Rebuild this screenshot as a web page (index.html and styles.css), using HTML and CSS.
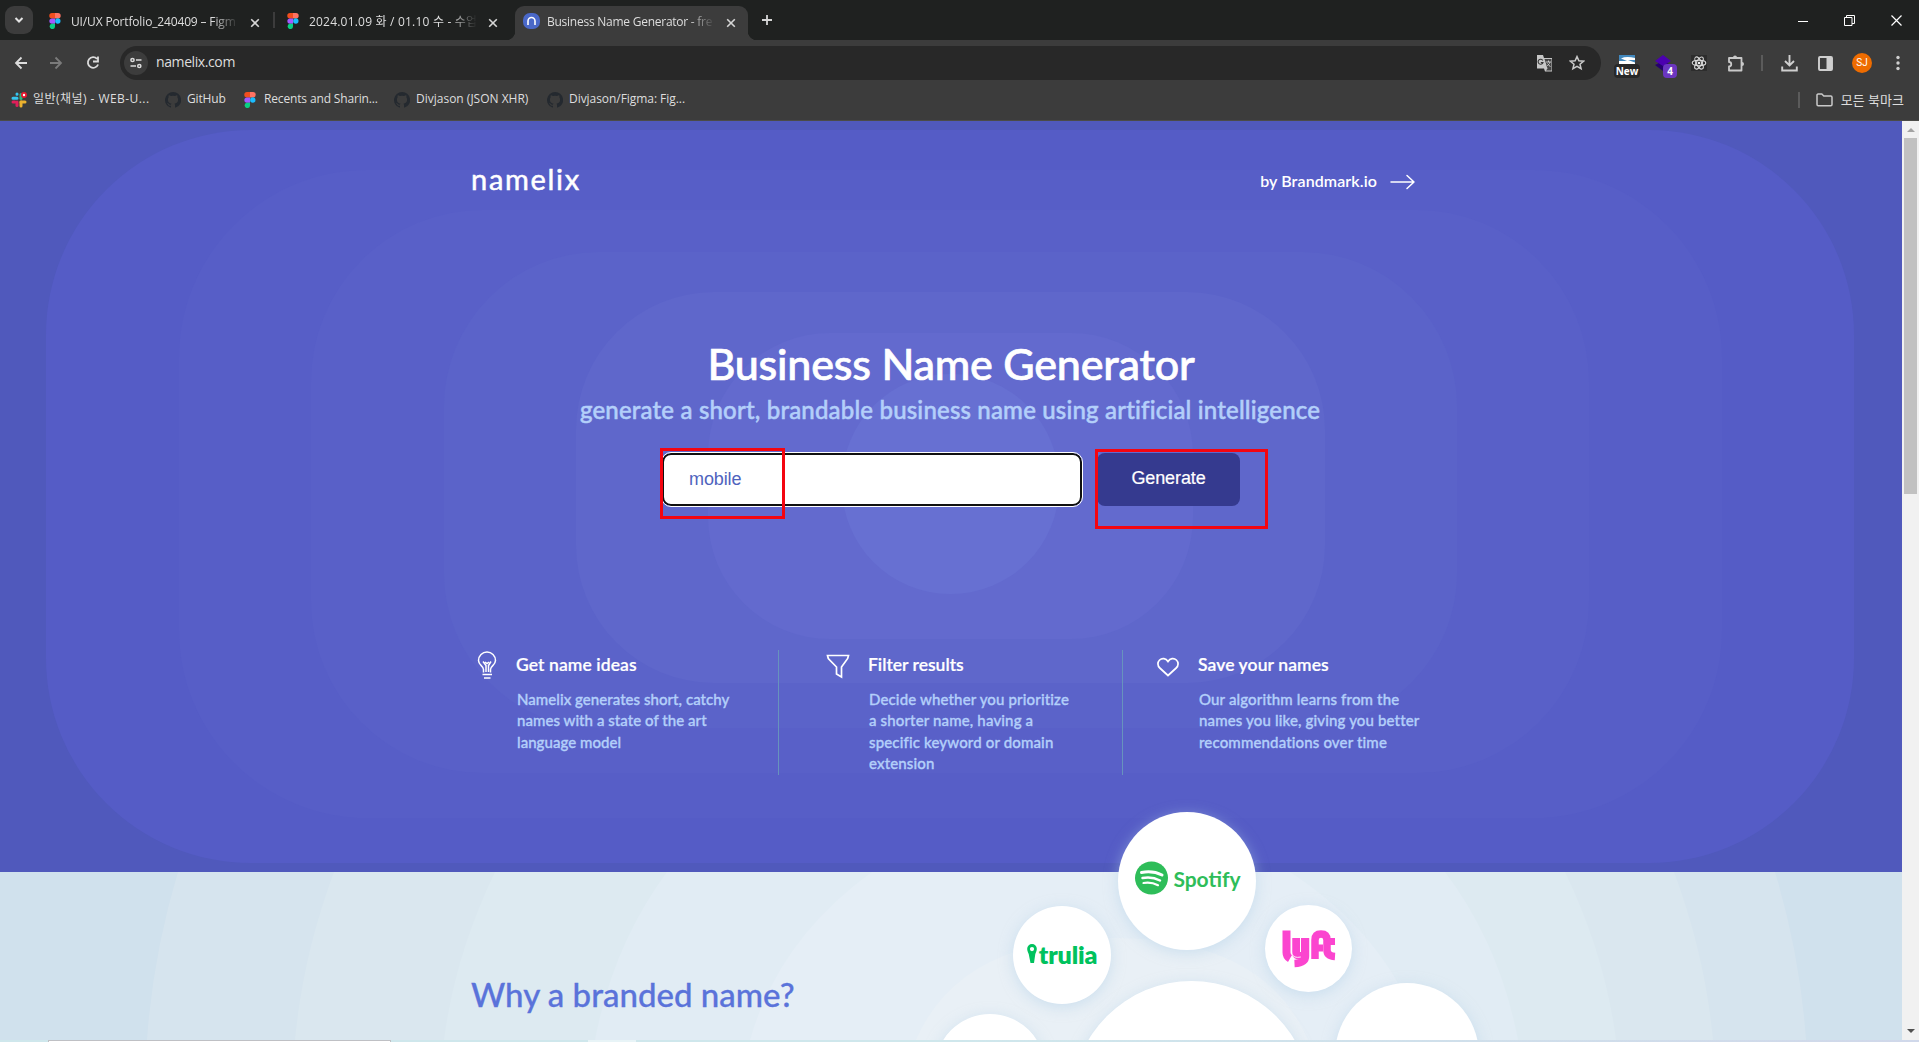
FILE: index.html
```
<!DOCTYPE html>
<html lang="ko">
<head>
<meta charset="utf-8">
<title>Business Name Generator</title>
<link rel="stylesheet" href="styles.css">
</head>
<body>
<svg width="0" height="0" class="defs">
  <symbol id="figma" viewBox="0 0 12 16"><path fill="#f24e1e" d="M3 0h3v5.400H3A2.700 2.700 0 0 1 3 0z"/><path fill="#ff7262" d="M6 0h3a2.700 2.700 0 0 1 0 5.400H6z"/><path fill="#a259ff" d="M3 5.400h3v5.300H3a2.650 2.650 0 0 1 0-5.300z"/><circle fill="#1abcfe" cx="8.800" cy="8" r="2.700"/><path fill="#0acf83" d="M3 10.700h3v2.600A2.700 2.700 0 1 1 3 10.700z"/></symbol>
  <symbol id="github" viewBox="0 0 16 16"><path fill="#24292f" d="M8 0a8 8 0 0 0-2.500 15.600c.4.1.5-.2.5-.4v-1.500c-2.200.5-2.700-1-2.700-1-.4-.9-.9-1.200-.9-1.200-.7-.5.1-.5.1-.5.8.1 1.200.8 1.200.8.7 1.300 1.900.9 2.300.7.1-.5.3-.9.5-1.100-1.800-.2-3.600-.9-3.600-4 0-.9.3-1.600.8-2.100-.1-.2-.4-1 .1-2.100 0 0 .7-.2 2.200.8a7.500 7.500 0 0 1 4 0c1.500-1 2.200-.8 2.200-.8.4 1.100.2 1.900.1 2.100.5.6.8 1.300.8 2.100 0 3.100-1.900 3.800-3.700 4 .3.300.6.8.6 1.500v2.300c0 .2.1.5.6.4A8 8 0 0 0 8 0z"/></symbol>
  <symbol id="close" viewBox="0 0 10 10"><path d="M1.200 1.200l7.600 7.600M8.800 1.200l-7.600 7.600" stroke="#d6d6d6" stroke-width="1.600"/></symbol>
</svg>
<div class="browser">
  <div class="tabs">
    <div class="tab-search"><svg width="18" height="28" viewBox="0 0 18 28"><path d="M5.500 12l3.500 3.500 3.500-3.500" fill="none" stroke="#e3e3e3" stroke-width="2"/></svg></div>
    <div class="tab tab-1"><svg class="fig" width="12" height="16"><use href="#figma"/></svg><span class="tab-title">UI/UX Portfolio_240409 – Figm</span><svg width="10" height="10"><use href="#close"/></svg></div>
    <div class="tab tab-2"><svg class="fig" width="12" height="16"><use href="#figma"/></svg><span class="tab-title">2024.01.09 화 / 01.10 수 - 수업</span><svg width="10" height="10"><use href="#close"/></svg></div>
    <div class="tab active"><svg class="nx" width="17" height="17" viewBox="0 0 17 17"><rect width="17" height="16" rx="7" fill="#4a68c8"/><path d="M5 12V8a3.500 3.500 0 0 1 7 0v4" fill="none" stroke="#fff" stroke-width="1.600"/></svg><span class="tab-title">Business Name Generator - fre</span><svg width="10" height="10"><use href="#close"/></svg></div>
    <svg class="plus" width="12" height="12" viewBox="0 0 12 12"><path d="M6 1v10M1 6h10" stroke="#d6d6d6" stroke-width="1.800"/></svg>
    <div class="win">
      <svg width="10" height="11"><path d="M0 6.500h10" stroke="#fff"/></svg>
      <svg width="11" height="11"><path d="M.5 2.500h7.500v8H.5zM2.500 2.500v-2h8v8H8" fill="none" stroke="#fff"/></svg>
      <svg width="11" height="11"><path d="M.5 .5l10 10M10.500 .5l-10 10" stroke="#fff" stroke-width="1.200"/></svg>
    </div>
  </div>
  <div class="toolbar">
    <svg class="nav" width="92" height="16" viewBox="0 0 92 16"><g fill="none" stroke-width="1.800"><path d="M13 8H2M7.500 2.500L2 8l5.500 5.500" stroke="#dcdcdc"/><path d="M36 8h11M41.500 2.500L47 8l-5.500 5.500" stroke="#7b7b7b"/><path d="M83 3.800a5.300 5.300 0 1 0 1.100 5.700M84 1.500v5h-5" stroke="#dcdcdc"/></g></svg>
    <div class="omnibox">
      <div class="site"><svg width="12" height="12" viewBox="0 0 12 12"><g fill="none" stroke="#dcdcdc" stroke-width="1.500"><circle cx="2.500" cy="3" r="1.600"/><path d="M6 3h5.500M.5 9H6"/><circle cx="9.300" cy="9" r="1.600"/></g></svg></div>
      <span class="url">namelix.com</span>
      <svg class="translate" width="17" height="17" viewBox="0 0 17 17"><path fill="#c7c7c7" d="M1 0h6l1 3h8v13.500H9l-1-3H1z"/><path d="M8.500 4h7v11.500H10l1.500-2z" fill="#454545"/><path d="M6.800 5.500A2.500 2.500 0 1 0 7 7.500H4.800M10 7h5M12.500 5.500V7M14 7c-.5 2-2 3.500-3.500 4M11.500 8.500l3 3.500" fill="none" stroke="#333" stroke-width="1.100"/><path d="M10 7h5M12.500 5.500V7M14 7c-.5 2-2 3.500-3.500 4M11.500 8.500l3 3.500" fill="none" stroke="#ccc"/></svg>
      <svg width="16" height="16" viewBox="0 0 16 16"><path d="M8 1.600l1.900 4.200 4.600.4-3.500 3 1.100 4.500L8 11.300l-4.100 2.400L5 9.200l-3.500-3 4.600-.4z" fill="none" stroke="#c9c9c9" stroke-width="1.500"/></svg>
    </div>
    <div class="exts">
      <div class="ext-new"><svg width="16" height="9" viewBox="0 0 16 9"><path fill="#4288bd" d="M0 0h16v9H0z"/><path fill="#fff" d="M2 3.500q5-2.500 14-.5v2H9l7 2.500V9H0V6h8z"/></svg><b>New</b></div>
      <div class="ext-layer"><svg width="17" height="17" viewBox="0 0 17 17"><path fill="#25006f" d="M0 10l8-4 8 4-8 6z"/><path fill="#4b00b0" d="M8 0l8 6-8 5-8-5z"/></svg><b>4</b></div>
      <svg class="react" width="16" height="16" viewBox="0 0 16 16"><path fill="#2d2d2d" d="M0 0h16v16H0z"/><g fill="none" stroke="#ddd" stroke-width="1.100"><ellipse cx="8" cy="8" rx="6.800" ry="2.700"/><ellipse cx="8" cy="8" rx="6.800" ry="2.700" transform="rotate(60 8 8)"/><ellipse cx="8" cy="8" rx="6.800" ry="2.700" transform="rotate(120 8 8)"/></g><circle cx="8" cy="8" r="1.300" fill="#eee"/></svg>
      <svg class="puzzle" width="18" height="17" viewBox="0 0 18 17"><path d="M2 3h12.500v12.500H2V11.500a2.200 2.200 0 0 0 0-4.500z" fill="none" stroke="#c9c9c9" stroke-width="1.800" stroke-linejoin="round"/><path d="M6 2.500a2 2 0 0 1 4 0zM15 7a2 2 0 0 1 0 4z" fill="#c9c9c9"/></svg>
      <i class="sep"></i>
      <svg class="dl" width="17" height="17" viewBox="0 0 17 17"><path d="M8.500 0v10M4 6l4.500 4.500L13 6M1.200 11.500v4h14.600v-4" fill="none" stroke="#cfcfcf" stroke-width="1.900"/></svg>
      <svg class="panel" width="15" height="15" viewBox="0 0 15 15"><rect x="1" y="1" width="13" height="13" rx="1" fill="none" stroke="#cfcfcf" stroke-width="1.900"/><path d="M8.500 1H14v13H8.500z" fill="#cfcfcf"/></svg>
      <div class="avatar">SJ</div>
      <svg class="dots" width="4" height="16" viewBox="0 0 4 16"><g fill="#cfcfcf"><circle cx="2" cy="2.500" r="1.700"/><circle cx="2" cy="8" r="1.700"/><circle cx="2" cy="13.500" r="1.700"/></g></svg>
    </div>
  </div>
  <div class="bookmarks">
    <div class="bm bm-1"><svg width="16" height="16" viewBox="0 0 16 16"><g stroke-width="3" stroke-linecap="round"><path d="M6 2v.3M2 6.300h4" stroke="#36c5f0"/><path d="M10 2.500v4" stroke="#2eb67d"/><path d="M10 10h4" stroke="#ecb22e"/><path d="M10 10v4" stroke="#ecb22e"/><path d="M2 10h2" stroke="#e01e5a"/><path d="M6 10v3.500" stroke="#e01e5a"/></g><circle cx="13" cy="3" r="3" fill="#e8162e"/><circle cx="13" cy="3" r="1.200" fill="#fff"/></svg><span>일반(채널) - WEB-U...</span></div>
    <div class="bm bm-2"><svg width="16" height="16"><use href="#github"/></svg><span>GitHub</span></div>
    <div class="bm bm-3"><svg width="12" height="16"><use href="#figma"/></svg><span>Recents and Sharin...</span></div>
    <div class="bm bm-4"><svg width="16" height="16"><use href="#github"/></svg><span>Divjason (JSON XHR)</span></div>
    <div class="bm bm-5"><svg width="16" height="16"><use href="#github"/></svg><span>Divjason/Figma: Fig...</span></div>
    <i class="sep"></i>
    <div class="all"><svg width="17" height="14" viewBox="0 0 17 14"><path d="M1 2.500a1.200 1.200 0 0 1 1.200-1.500h3.600l2 2h7a1.200 1.200 0 0 1 1.200 1.200v7.300a1.200 1.200 0 0 1-1.200 1.200H2.200A1.200 1.200 0 0 1 1 11.500z" fill="none" stroke="#c9c9c9" stroke-width="1.500"/></svg><span>모든 북마크</span></div>
  </div>
</div>
<div class="viewport">
  <main class="page">
    <section class="hero">
      <svg class="rings" width="1902" height="751" viewBox="0 121 1902 751">
        <rect x="46" y="130" width="1808" height="733" rx="205" fill="#555cc6"/>
        <rect x="179" y="170" width="1543" height="648" rx="188" fill="#575ec7"/>
        <rect x="311" y="210" width="1278" height="563" rx="172" fill="#5960c8"/>
        <rect x="444" y="252" width="1013" height="476" rx="155" fill="#5b63c9"/>
        <rect x="576" y="292" width="749" height="391" rx="138" fill="#5f67cb"/>
        <rect x="708" y="333" width="485" height="306" rx="122" fill="#636ace"/>
        <rect x="842" y="374" width="217" height="220" rx="108" fill="#6770d2"/>
      </svg>
      <header class="site-head">
        <span class="logo">namelix</span>
        <span class="by">by Brandmark.io</span>
        <svg width="26" height="16" viewBox="0 0 26 16"><path d="M1 8h23M17 1.500L24 8l-7 6.500" fill="none" stroke="#fff" stroke-width="1.500" stroke-linecap="round" stroke-linejoin="round"/></svg>
      </header>
      <h1>Business Name Generator</h1>
      <p class="sub">generate a short, brandable business name using artificial intelligence</p>
      <div class="form"><div class="input">mobile</div><div class="button">Generate</div></div>
      <div class="features">
        <div class="feature f1">
          <svg width="20" height="30" viewBox="0 0 20 30"><g fill="none" stroke="#fff" stroke-width="1.500"><path d="M6.500 21.500v-3C6.500 15 1.500 14 1.500 9.500a8.500 8.500 0 0 1 17 0c0 4.500-5 5.500-5 9v3"/><path d="M9 21v-6.500L6 10.500M11.500 21v-6.500L14 10.500M8 11l2 1.500 2-1.500M5.500 23.500h9.500M7 27h6.500"/></g></svg>
          <div><h3>Get name ideas</h3><p>Namelix generates short, catchy<br>names with a state of the art<br>language model</p></div>
        </div>
        <div class="feature f2">
          <svg width="24" height="25" viewBox="0 0 24 25"><path d="M1.500 1.500h21l-.8 3-6.200 8.500v10l-5-3v-7L2.300 4.500z" fill="none" stroke="#fff" stroke-width="1.700"/></svg>
          <div><h3>Filter results</h3><p>Decide whether you prioritize<br>a shorter name, having a<br>specific keyword or domain<br>extension</p></div>
        </div>
        <div class="feature f3">
          <svg width="22" height="20" viewBox="0 0 22 20"><path d="M11 18.500L2.800 11A5.400 5.400 0 0 1 2.600 3c2.400-2.300 6.300-1.900 8.400 1.500C13.100 1.100 17 .7 19.400 3a5.400 5.400 0 0 1-.2 8z" fill="none" stroke="#fff" stroke-width="1.700"/></svg>
          <div><h3>Save your names</h3><p>Our algorithm learns from the<br>names you like, giving you better<br>recommendations over time</p></div>
        </div>
      </div>
    </section>
    <section class="why">
      <svg class="arcs" width="1902" height="168" viewBox="0 872 1902 168">
        <path fill="#d6e4ee" d="M178 872Q153 955 147 1040H1806Q1800 955 1775 872z"/>
        <path fill="#dae7ef" d="M334 872Q303 955 295 1040H1713Q1705 955 1674 872z"/>
        <path fill="#ddeaf1" d="M495 872Q455 955 444 1040H1616Q1605 955 1565 872z"/>
        <path fill="#e1ecf4" d="M667 872Q613 945 595 1040H1518Q1500 945 1445 872z"/>
        <path fill="#e5eef6" d="M872 872Q779 939 750 1040H1422Q1392 939 1290 872z"/>
        <path fill="#e9f0f6" d="M916 1040Q960 938 1112 938T1308 1040z"/>
      </svg>
      <h2>Why a branded name?</h2>
    </section>
    <div class="bubble spotify"><svg width="33" height="34" viewBox="0 0 33 34"><circle cx="16.500" cy="17" r="16.500" fill="#2ebd59"/><g fill="none" stroke="#fff" stroke-linecap="round"><path d="M6.500 11.500c8-1.500 14-.8 20.500 2.500" stroke-width="3"/><path d="M7.500 17c7-1.300 12-.5 17.500 2.500" stroke-width="2.500"/><path d="M8.500 22c5.500-1 9.500-.4 14.500 2.200" stroke-width="2.200"/></g></svg><span>Spotify</span></div>
    <div class="bubble trulia"><svg width="10" height="20" viewBox="0 0 10 20"><path fill="#00c25e" fill-rule="evenodd" d="M5 0a4.800 4.800 0 0 1 4.800 5c0 2-.8 3-1.500 5L7 19H3.500L1.700 10C1 8 .2 7 .2 5A4.800 4.800 0 0 1 5 0zm0 3a2 2 0 1 0 0 4.200A2 2 0 0 0 5 3z"/></svg><span>trulia</span></div>
    <div class="bubble lyft"><svg width="54" height="38" viewBox="0 0 54 38" role="img" aria-label="lyft"><g fill="none" stroke="#fb45cf"><path d="M4.500 .5v22q0 4 3.500 6" stroke-width="8"/><path d="M14 8v14q0 4 5 4 4 0 4-4V8" stroke-width="8"/><path d="M23.500 8v18q0 7-11 7.500" stroke-width="7.500"/><path d="M33 29V10q0-6 6-6t6 6v10q0 6 8 6.500" stroke-width="7.500"/><path d="M33 18h8M45 11.500h8" stroke-width="7"/></g><path d="M9.800 8v16q2 4.500 9 3" fill="none" stroke="#fff" stroke-width=".9"/><path d="M28.300 8v22" stroke="#fff" stroke-width=".9"/></svg></div>
    <div class="bubble b-main"></div><div class="bubble b-right"></div><div class="bubble b-left"></div>
    <div class="mark mark-input"></div><div class="mark mark-button"></div>
  </main>
  <div class="scroll"><i class="up"></i><div class="thumb"></div><i class="down"></i></div>
</div>
<div class="desktop"><i class="panel-edge"></i><i class="pale"></i></div>
</body>
</html>
```
FILE: styles.css
```
*{box-sizing:border-box}
body{margin:0;width:1919px;height:1042px;overflow:hidden;font-family:Lato,"Noto Sans",sans-serif;background:#fff}
.defs{position:absolute}
svg{display:block;flex:none}
h1,h2,h3,p{margin:0}
.browser{height:121px;background:#3c3c3c;color:#dedede;font-family:"Open Sans","Noto Sans CJK KR",sans-serif;font-size:12px;border-bottom:1px solid #4b4b48}
.tabs{height:40px;background:#1f2120;display:flex;align-items:flex-start;padding-left:5px}
.tab-search{width:28px;height:28px;margin:6px 12px 0 0;border-radius:9px;background:#3c3c3c;display:flex;justify-content:center}
.tab{height:34px;margin-top:6px;display:flex;align-items:center}
.tab-title{white-space:nowrap;-webkit-mask-image:linear-gradient(90deg,#000 84%,transparent);mask-image:linear-gradient(90deg,#000 84%,transparent);line-height:20px;letter-spacing:-.25px;margin-top:-2px}
.tab .fig{margin-right:10px;margin-top:-4px}
.tab-1{width:232px;padding-left:4px}
.tab-1 .tab-title{width:168px;margin-right:11px;letter-spacing:-.15px}
.tab-2{width:238px;padding-left:10px;position:relative}
.tab-2::before{content:"";position:absolute;left:-4px;top:6px;width:2px;height:16px;background:#3c3c3c}
.tab-2 .tab-title{width:168px;margin-right:11px;letter-spacing:.2px}
.active{width:233px;background:#3c3c3c;border-radius:9px 9px 0 0;padding-left:8px;position:relative}
.active .nx{margin-right:7px;margin-top:-4px}
.active .tab-title{width:168px;margin-right:11px}
.active::before,.active::after{content:"";position:absolute;bottom:0;width:9px;height:9px}
.active::before{left:-9px;background:radial-gradient(circle at 0 0,#1f2120 9px,#3c3c3c 9.500px)}
.active::after{right:-9px;background:radial-gradient(circle at 100% 0,#1f2120 9px,#3c3c3c 9.500px)}
.plus{margin:14px 0 0 13px}
.win{margin-left:auto;display:flex;gap:36px;padding:15px 17px 0 0}
.toolbar{height:46px;display:flex;align-items:center;padding:0 20px 0 14px}
.nav{margin-right:14px}
.omnibox{width:1481px;height:34px;border-radius:17px;background:#282828;display:flex;align-items:center;padding:0 16px 0 4px}
.omnibox{flex:none}
.site{width:24px;height:24px;border-radius:12px;background:#3c3c3c;display:flex;align-items:center;justify-content:center;margin-right:8px}
.url{font-size:14px;letter-spacing:-.4px;line-height:20px;margin:-2px auto 0 0}
.translate{margin-right:16px}
.exts{flex:1;display:flex;align-items:center}
.exts b{color:#fff;border-radius:4px;font-size:10px;line-height:14px;text-align:center;position:absolute}
.ext-new,.ext-layer{position:relative;height:17px}
.ext-new{margin-left:18px;width:16px}
.ext-new b{left:-5px;top:9px;width:26px;background:#282828}
.ext-layer{margin-left:20px;width:17px}
.ext-layer b{left:8px;top:9px;width:14px;background:#6b36c0}
.react{margin-left:19px}
.puzzle{margin-left:20px}
.sep{width:2px;height:16px;background:#5b5b5b}
.exts .sep{margin:0 18px 0 16px}
.panel{margin:0 19px 0 20px}
.avatar{width:20px;height:20px;border-radius:50%;background:#ee6c00;color:#fff;font:10px/20px Roboto,sans-serif;text-align:center}
.dots{margin-left:24px}
.bookmarks{height:27px;display:flex;align-items:center;padding:0 15px 0 11px}
.bm,.all{display:flex;align-items:center;white-space:nowrap;gap:6px}
.bm-1{width:154px}.bm-2{width:79px}.bm-3{width:150px}.bm-4{width:153px}.bm-5{width:160px}
.bm span{letter-spacing:-.15px;line-height:18px;margin-top:-1px}
.bm-1 span{letter-spacing:.45px}
.bm-4 span{letter-spacing:0}
.bm-5 span{letter-spacing:-.05px}
.bm-3{gap:8px}
.bookmarks>.sep{margin-left:auto;margin-right:16px}
.all{gap:8px;font-size:13px}
.viewport{height:919px;display:flex}
.page{width:1902px;height:919px;position:relative;overflow:hidden}
.hero{height:751px;background:#5059bc;position:relative;color:#fff}
.rings,.arcs{position:absolute;left:0;top:0}
.hero>*:not(.rings),.why h2{position:relative}
.site-head{display:flex;align-items:center;padding:38px 486px 0 471px;height:84px}
.logo{font-size:29px;letter-spacing:1.700px;line-height:40px;margin:-7px auto 0 0;-webkit-text-stroke:.5px currentColor}
.by{font-size:16px;font-weight:600;letter-spacing:.1px;margin:-4px 13px 0 0}
h1{font-size:43px;font-weight:500;letter-spacing:-.2px;line-height:52px;text-align:center;padding-top:133px;-webkit-text-stroke:.7px currentColor}
.sub{font-size:24px;font-weight:500;line-height:30px;letter-spacing:.18px;text-align:center;color:#b3cffa;margin-top:5px;padding-right:2px;-webkit-text-stroke:.5px currentColor}
.form{display:flex;gap:15px;margin:28px 0 0 662px;font-family:"Liberation Sans",sans-serif;font-size:18px;line-height:51px}
.input{width:420px;height:53px;border:2px solid #101010;outline:1px solid #fff;border-radius:9px;background:#fff;color:#4f63bd;padding-left:25px;line-height:48px;letter-spacing:-.1px}
.button{width:143px;height:53px;border-radius:8px;background:#353a8f;text-align:center;letter-spacing:-.1px;-webkit-text-stroke:.2px currentColor}
.features{display:flex;margin:144px 0 0 476px;height:125px}
.feature{display:flex;padding-top:4px}
.feature>svg{margin-right:19px}
.feature h3{font-size:17.500px;font-weight:600;line-height:22px;letter-spacing:.1px;-webkit-text-stroke:.2px currentColor}
.feature p{font-size:15px;font-weight:500;line-height:21.300px;letter-spacing:.15px;color:#b3cffa;margin:13px 0 0 1px;white-space:nowrap;-webkit-text-stroke:.35px currentColor}
.f1{width:303px;border-right:1px solid #6793bd;padding-top:1px}
.f1>svg{margin:0 19px 0 1px}
.f1 h3{margin-top:3px}
.f1 p{letter-spacing:.05px}
.f2{width:344px;border-right:1px solid #6793bd;padding-left:47px}
.f2>svg{margin-right:18px}
.f2 h3{letter-spacing:0}
.f3{padding-left:34px}
.f3>svg{margin-top:3px}
.why{height:168px;background:#d0e1ed;position:relative}
h2{font-size:33px;font-weight:500;line-height:40px;color:#5a73da;padding:102px 0 0 471px;-webkit-text-stroke:.3px currentColor}
.bubble{position:absolute;border-radius:50%;background:#fff;box-shadow:0 3px 14px rgba(175,208,232,.5);display:flex;align-items:center;justify-content:center}
.spotify{left:1118px;top:691px;width:138px;height:138px;gap:5px;color:#2ebd59;font-size:21px;font-weight:700;letter-spacing:0;padding:0 0 6px 2px}
.trulia{left:1013px;top:785px;width:98px;height:98px;gap:2px;color:#00c25e;font-size:25px;font-weight:800;letter-spacing:-.2px;padding-bottom:3px}
.trulia svg{margin-top:1px}
.lyft{left:1265px;top:784px;width:87px;height:87px}
.b-main{left:1072px;top:860px;width:239px;height:239px}
.b-right{left:1335px;top:862px;width:144px;height:144px}
.b-left{left:935px;top:893px;width:110px;height:110px}
.mark{position:absolute;border:3px solid #f40510}
.mark-input{left:660px;top:327px;width:125px;height:71px}
.mark-button{left:1095px;top:328px;width:173px;height:80px}
.scroll{width:17px;background:#f1f1f1;display:flex;flex-direction:column;align-items:center;padding:7px 0 7px}
.scroll i{border:4px solid transparent}
.up{border-top:0!important;border-bottom-color:#a3a3a3!important}
.down{border-bottom:0!important;border-top-color:#505050!important;margin-top:auto}
.thumb{width:13px;height:356px;background:#c1c1c1;margin-top:6px}
.desktop{height:2px;background:linear-gradient(90deg,#cfe7ec 50%,#d0d8ea);display:flex;gap:197px;padding-left:48px}
.panel-edge{width:343px;background:#fff;border:1px solid #bfc0c4;border-bottom:0}
.pale{width:48px;background:#e8f4f7}
```
